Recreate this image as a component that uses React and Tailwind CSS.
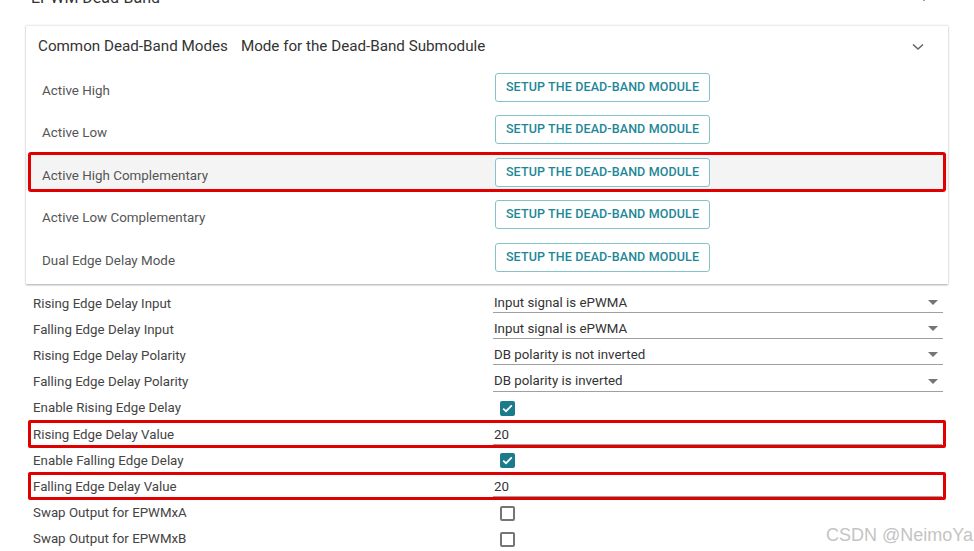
import React from "react";

const modes = [
  "Active High",
  "Active Low",
  "Active High Complementary",
  "Active Low Complementary",
  "Dual Edge Delay Mode",
];

const props = [
  { label: "Rising Edge Delay Input", type: "select", value: "Input signal is ePWMA" },
  { label: "Falling Edge Delay Input", type: "select", value: "Input signal is ePWMA" },
  { label: "Rising Edge Delay Polarity", type: "select", value: "DB polarity is not inverted" },
  { label: "Falling Edge Delay Polarity", type: "select", value: "DB polarity is inverted" },
  { label: "Enable Rising Edge Delay", type: "check", value: true },
  { label: "Rising Edge Delay Value", type: "text", value: "20" },
  { label: "Enable Falling Edge Delay", type: "check", value: true },
  { label: "Falling Edge Delay Value", type: "text", value: "20" },
  { label: "Swap Output for EPWMxA", type: "check", value: false },
  { label: "Swap Output for EPWMxB", type: "check", value: false },
];

function Chevron() {
  return (
    <svg width="12" height="8" viewBox="0 0 12 8">
      <path d="M1 1.5 L6 6 L11 1.5" fill="none" stroke="#666" strokeWidth="1.6" />
    </svg>
  );
}

function Checkbox({ checked }) {
  if (checked) {
    return (
      <div className="w-[15px] h-[15px] rounded-[2px] bg-[#1b7b8c] flex items-center justify-center">
        <svg width="11" height="9" viewBox="0 0 11 9">
          <path d="M1.2 4.6 L4 7.2 L9.8 1.4" fill="none" stroke="#fff" strokeWidth="1.7" />
        </svg>
      </div>
    );
  }
  return <div className="w-[15px] h-[15px] rounded-[2px] border-2 border-[#757575]" />;
}

function Field({ p }) {
  if (p.type === "select") {
    return (
      <div className="w-[450px] h-[20px] flex items-center justify-between border-b border-[#a0a0a0] pl-[1px] pr-[5px] -mt-[1px]">
        <span className="text-[13.3px] text-[#333]">{p.value}</span>
        <svg width="10" height="5" viewBox="0 0 10 5">
          <path d="M0 0 L10 0 L5 5 z" fill="#757575" />
        </svg>
      </div>
    );
  }
  if (p.type === "text") {
    return (
      <div className="w-[449px] h-[20px] flex items-center border-b border-[#a0a0a0] pl-[1px] mt-[1px]">
        <span className="text-[13.3px] text-[#333]">{p.value}</span>
      </div>
    );
  }
  return (
    <div className="pl-[7px]">
      <Checkbox checked={p.value} />
    </div>
  );
}

export default function App() {
  return (
    <div
      className="relative w-[974px] h-[551px] overflow-hidden bg-white"
      style={{ fontFamily: "Roboto, 'Liberation Sans', sans-serif" }}
    >
      {/* Section title, cut off at the top */}
      <div className="h-[25px] flex justify-between pl-[31px] pr-[44px]">
        <span className="text-[16px] text-[#333] leading-[20px] -mt-[12px]">EPWM Dead-Band</span>
        <div className="-mt-[6px]">
          <Chevron />
        </div>
      </div>

      {/* Expansion panel */}
      <div className="ml-[26px] w-[922px] bg-white border-t border-[#ececec] shadow-[0_1px_2px_rgba(0,0,0,0.35)] pb-[5px]">
        <div className="h-[40px] flex items-center justify-between pl-[12px] pr-[24px] pt-[1px]">
          <div className="flex items-center gap-[13px] text-[15.2px] text-[#333]">
            <span>Common Dead-Band Modes</span>
            <span>Mode for the Dead-Band Submodule</span>
          </div>
          <Chevron />
        </div>
        {modes.map((m, i) => (
          <div key={m} className="h-[42.5px] flex items-center">
            <div
              className={
                "w-full h-[36px] flex items-center " +
                (i === 2 ? "bg-[#f4f4f4]" : "")
              }
            >
              <div className="w-[469px] pl-[16px] pt-[7px] text-[13.4px] text-[#555]">{m}</div>
              <button className="h-[29px] w-[215px] rounded-[3px] border border-[#86c2cb] bg-white text-[12.5px] font-medium text-[#1d8797] tracking-[0.01em] uppercase">
                Setup the Dead-Band Module
              </button>
            </div>
          </div>
        ))}
      </div>

      {/* Property rows */}
      <div className="mt-[7px]">
        {props.map((p) => (
          <div key={p.label} className="h-[26.2px] flex items-center">
            <div className="w-[493px] pl-[33px] text-[13.3px] text-[#444]">{p.label}</div>
            <Field p={p} />
          </div>
        ))}
      </div>

      {/* Red annotation boxes */}
      <div className="absolute left-[28px] top-[152px] w-[918px] h-[40px] border-[3px] border-[#e00000] rounded-[3px] pointer-events-none" />
      <div className="absolute left-[28px] top-[420px] w-[918px] h-[28px] border-[3px] border-[#e00000] rounded-[2px] pointer-events-none" />
      <div className="absolute left-[28px] top-[472px] w-[918px] h-[28px] border-[3px] border-[#e00000] rounded-[2px] pointer-events-none" />

      {/* Watermark */}
      <div
        className="absolute left-[826px] top-[522px] whitespace-nowrap text-[18px] text-[#c4c4c4]"
        style={{ fontFamily: "'Liberation Sans', Arial, sans-serif" }}
      >
        CSDN @NeimoYa
      </div>
    </div>
  );
}
